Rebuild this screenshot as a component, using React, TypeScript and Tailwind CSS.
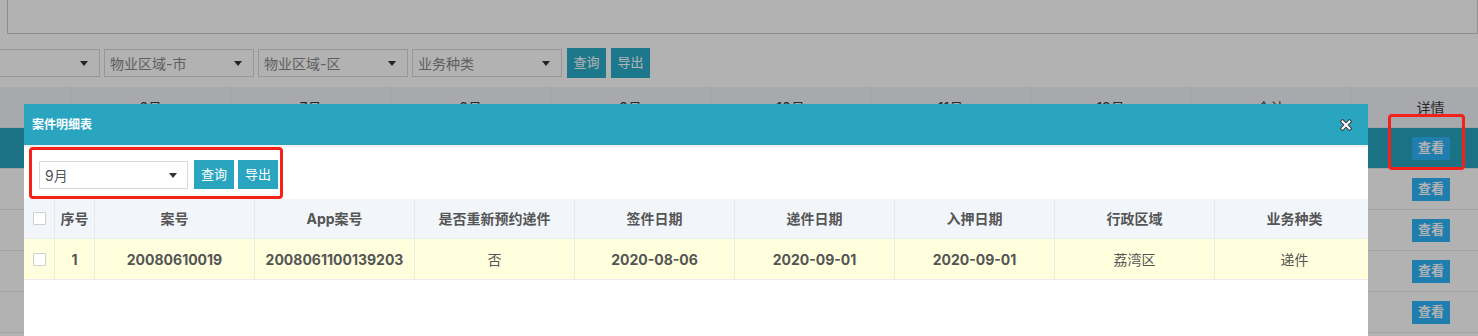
import React from 'react';

const bgCols = ['5月', '6月', '7月', '8月', '9月', '10月', '11月', '12月', '合计', '详情'];

const detailCols = [
  { label: '案号', w: 'w-[160px]' },
  { label: 'App案号', w: 'w-[160px]' },
  { label: '是否重新预约递件', w: 'w-[160px]' },
  { label: '签件日期', w: 'w-[160px]' },
  { label: '递件日期', w: 'w-[160px]' },
  { label: '入押日期', w: 'w-[160px]' },
  { label: '行政区域', w: 'w-[160px]' },
  { label: '业务种类', w: 'w-[160px]' },
];

const detailRows = [
  {
    no: '1',
    cells: [
      { v: '20080610019', bold: true },
      { v: '2008061100139203', bold: true },
      { v: '否', bold: false },
      { v: '2020-08-06', bold: true },
      { v: '2020-09-01', bold: true },
      { v: '2020-09-01', bold: true },
      { v: '荔湾区', bold: false },
      { v: '递件', bold: false },
    ],
  },
];

function Caret() {
  return (
    <svg width="8" height="5" viewBox="0 0 8 5" className="shrink-0">
      <path d="M0 0h8L4 5z" fill="#333" />
    </svg>
  );
}

function FilterSelect({ label }: { label: string }) {
  return (
    <div className="flex h-[28px] w-[150px] shrink-0 items-center justify-between border border-[#d9d9d9] bg-white pl-[5px] pr-[11px] text-[14px] text-[#888]">
      <span>{label}</span>
      <Caret />
    </div>
  );
}

function Checkbox() {
  return <span className="block h-[13px] w-[13px] rounded-[1px] border border-[#cfcfcf] bg-white" />;
}

export default function App() {
  return (
    <div className="relative h-[336px] w-[1478px] overflow-hidden bg-white font-['Inter','Noto_Sans_CJK_SC',sans-serif]">
      {/* page behind the dialog */}
      <div className="ml-[7px] h-[34px] border-x border-b border-[#cccccc]" />

      <div className="ml-[-50px] mt-[14px] flex items-center gap-[4px]">
        <FilterSelect label="" />
        <FilterSelect label="物业区域-市" />
        <FilterSelect label="物业区域-区" />
        <FilterSelect label="业务种类" />
        <button className="ml-[1px] h-[30px] w-[39px] bg-[#2cadc8] text-[13px] text-white">查询</button>
        <button className="ml-[1px] h-[30px] w-[39px] bg-[#2cadc8] text-[13px] text-white">导出</button>
      </div>

      <div className="ml-[-89px] mt-[9px] flex flex-col">
        <div className="flex h-[41px] border-b border-[#e4e8ec] bg-[#eff3f8]">
          {bgCols.map((c) => (
            <div key={c} className="flex w-[160px] shrink-0 items-center justify-center border-r border-[#e2e6ea] text-[14px] text-[#3a3a3a]">
              {c}
            </div>
          ))}
        </div>
        {[0, 1, 2, 3, 4].map((r) => (
          <div key={r} className={`flex h-[41px] border-b border-[#e8e8e8] ${r === 0 ? 'bg-[#28a4bd]' : 'bg-white'}`}>
            {bgCols.map((c) => (
              <div key={c} className="flex w-[160px] shrink-0 items-center justify-center">
                {c === '详情' && (
                  <span className="flex h-[23px] w-[38px] items-center justify-center bg-[#2db5fa] text-[13px] font-bold text-white">查看</span>
                )}
              </div>
            ))}
          </div>
        ))}
      </div>

      {/* dim overlay */}
      <div className="absolute inset-0 bg-black/30" />

      {/* dialog */}
      <div className="absolute left-[24px] top-[104px] h-[260px] w-[1344px] overflow-hidden bg-white">
        <div className="flex h-[41px] items-center justify-between bg-[#29a5bf] pl-[8px] pr-[16px]">
          <span className="text-[12px] font-bold text-white">案件明细表</span>
          <svg width="12" height="12" viewBox="0 0 12 12">
            <path d="M2.5 2.5L9.5 9.5M9.5 2.5L2.5 9.5" stroke="#3a3a3a" strokeWidth="4" strokeLinecap="square" />
            <path d="M2.5 2.5L9.5 9.5M9.5 2.5L2.5 9.5" stroke="#ffffff" strokeWidth="2" strokeLinecap="square" />
          </svg>
        </div>
        <div className="h-[2px] bg-[#efefef]" />

        <div className="flex items-start gap-[6px] pl-[15px] pt-[13px]">
          <div className="mt-[1px] flex h-[28px] w-[149px] items-center justify-between border border-[#d9d9d9] bg-white pl-[5px] pr-[10px] text-[14px] text-[#555]">
            <span>9月</span>
            <Caret />
          </div>
          <button className="h-[29px] w-[40px] bg-[#29a5bf] text-[13px] text-white">查询</button>
          <button className="-ml-[2px] h-[29px] w-[40px] bg-[#29a5bf] text-[13px] text-white">导出</button>
        </div>

        <div className="mt-[10px] flex flex-col">
          <div className="flex h-[40px] border-b border-[#e8ebef] bg-[#f2f5fa] text-[14px] font-bold text-[#555]">
            <div className="flex w-[31px] shrink-0 items-center justify-center border-r border-[#e6e9ee] pl-[1px]">
              <Checkbox />
            </div>
            <div className="flex w-[40px] shrink-0 items-center justify-center border-r border-[#e6e9ee]">序号</div>
            {detailCols.map((c) => (
              <div key={c.label} className={`flex ${c.w} shrink-0 items-center justify-center border-r border-[#e6e9ee]`}>
                {c.label}
              </div>
            ))}
          </div>
          {detailRows.map((row) => (
            <div key={row.no} className="flex h-[41px] border-b border-[#ececec] bg-[#ffffdd] text-[14px] text-[#555]">
              <div className="flex w-[31px] shrink-0 items-center justify-center border-r border-[#ececdc] pl-[1px]">
                <Checkbox />
              </div>
              <div className="flex w-[40px] shrink-0 items-center justify-center border-r border-[#ececdc] font-bold">{row.no}</div>
              {row.cells.map((c, i) => (
                <div key={i} className={`flex w-[160px] shrink-0 items-center justify-center border-r border-[#ececdc] ${c.bold ? 'font-bold' : ''}`}>
                  {c.v}
                </div>
              ))}
            </div>
          ))}
        </div>
      </div>

      {/* annotation boxes */}
      <div className="absolute left-[29px] top-[147px] h-[52px] w-[254px] rounded-[4px] border-[3px] border-[#f2221b]" />
      <div className="absolute left-[1388px] top-[114px] h-[56px] w-[77px] rounded-[4px] border-[3px] border-[#f2221b]" />
    </div>
  );
}
